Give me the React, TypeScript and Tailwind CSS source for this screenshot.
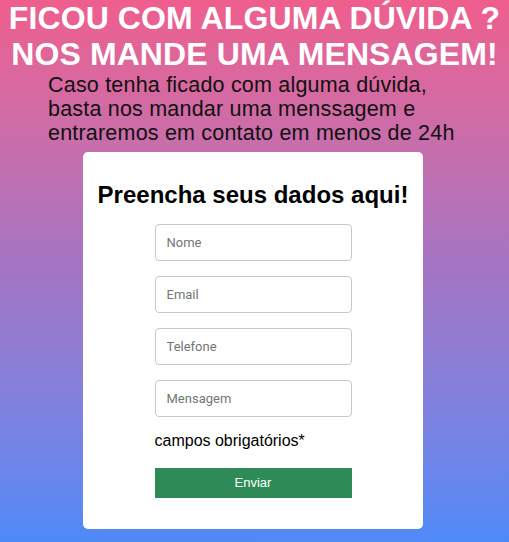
import React from 'react';

export default function App() {
  return (
    <div
      className="min-h-[542px] w-full bg-gradient-to-b from-[#ef5e8d] via-[#a375c4] to-[#4d8af8] pb-[14px]"
      style={{ fontFamily: '"Liberation Sans", Arial, sans-serif' }}
    >
      {/* Heading */}
      <h1 className="text-center text-[32px] leading-[36px] font-bold text-white tracking-[0.1px]">
        FICOU COM ALGUMA DÚVIDA ?<br />
        NOS MANDE UMA MENSAGEM!
      </h1>

      {/* Intro */}
      <p className="ml-[48px] mt-[1px] w-[420px] text-[21.5px] leading-[24px] tracking-[0.2px] text-[#111]">
        Caso tenha ficado com alguma dúvida, basta nos mandar uma menssagem e entraremos em contato em menos de 24h
      </p>

      {/* Form card */}
      <div className="ml-[83px] mt-[7px] w-[340px] rounded-[5px] bg-white pt-[29px] pb-[31px] flex flex-col items-center">
        <h2 className="text-[24px] leading-[28px] font-bold text-black">Preencha seus dados aqui!</h2>
        <div className="mt-[15px] flex flex-col gap-[15px]">
          {['Nome', 'Email', 'Telefone', 'Mensagem'].map((p) => (
            <input
              key={p}
              type="text"
              placeholder={p}
              className="h-[37px] w-[197px] rounded-[4px] border border-[#c8c8c8] px-[11px] text-[13px] outline-none placeholder:text-[#757575]"
              style={{ fontFamily: 'Roboto, "Liberation Sans", sans-serif' }}
            />
          ))}
        </div>
        <p className="mt-[14px] w-[197px] text-[16px] leading-[20px] text-black">campos obrigatórios*</p>
        <button className="mt-[17px] h-[30px] w-[197px] bg-[#2e8b57] text-[13px] text-white">Enviar</button>
      </div>
    </div>
  );
}
